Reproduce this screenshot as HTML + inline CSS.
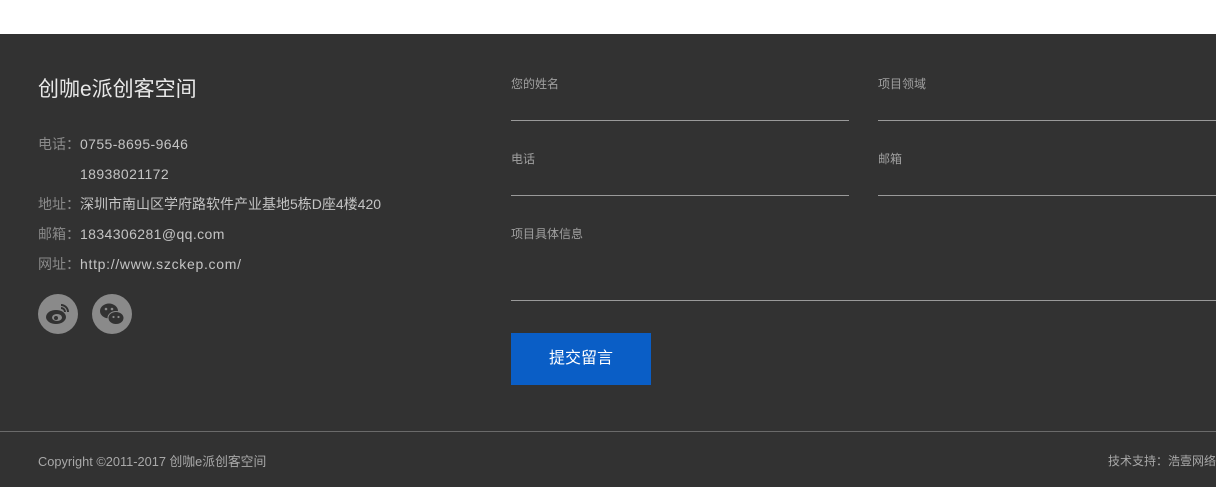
<!DOCTYPE html>
<html><head><meta charset="utf-8"><style>
*{margin:0;padding:0;box-sizing:border-box}
body{width:1216px;height:487px;overflow:hidden;background:#fff;font-family:"Liberation Sans","Noto Sans CJK SC",sans-serif;position:relative}
.f{position:absolute;left:0;top:34px;width:1216px;height:453px;background:#323232}
.a{position:absolute;white-space:nowrap}
.t{left:38px;top:76px;font-size:21px;color:#e8e8e8;line-height:28px}
.l{font-size:14px;color:#8a8a8a;line-height:18px}
.v{font-size:14px;color:#c4c4c4;line-height:18px}
.ls{letter-spacing:0.4px}
.lab{font-size:12px;color:#a0a0a0}
.line{position:absolute;height:1px;background:#9a9a9a}
.c{position:absolute;width:40px;height:40px;border-radius:50%;background:#8a8a8a;top:294px}
</style></head><body>
<div class="f"></div>
<div class="a t">创咖e派创客空间</div>
<div class="a l" style="left:38px;top:135px">电话：</div><div class="a v ls" style="left:80px;top:135px">0755-8695-9646</div>
<div class="a v ls" style="left:80px;top:165px">18938021172</div>
<div class="a l" style="left:38px;top:195px">地址：</div><div class="a v" style="left:80px;top:195px">深圳市南山区学府路软件产业基地5栋D座4楼420</div>
<div class="a l" style="left:38px;top:225px">邮箱：</div><div class="a v ls" style="left:80px;top:225px">1834306281@qq.com</div>
<div class="a l" style="left:38px;top:255px">网址：</div><div class="a v ls" style="left:80px;top:255px;letter-spacing:0.7px">http://www.szckep.com/</div>
<div class="c" style="left:38px"><svg width="40" height="40" viewBox="0 0 40 40"><ellipse cx="18" cy="23" rx="10" ry="7" fill="#323232"/><ellipse cx="19" cy="23.5" rx="5" ry="3.5" fill="#8a8a8a"/><circle cx="18" cy="24" r="2" fill="#323232"/><path d="M23 11a7 7 0 0 1 7 7M23 14a4 4 0 0 1 4 4" stroke="#323232" stroke-width="2" fill="none"/></svg></div>
<div class="c" style="left:92px"><svg width="40" height="40" viewBox="0 0 40 40"><ellipse cx="17" cy="17" rx="9" ry="7.5" fill="#323232"/><ellipse cx="24" cy="24" rx="8" ry="6.5" fill="#323232" stroke="#8a8a8a" stroke-width="1"/><circle cx="14" cy="15" r="1.3" fill="#8a8a8a"/><circle cx="20" cy="15" r="1.3" fill="#8a8a8a"/><circle cx="21.5" cy="23" r="1.1" fill="#8a8a8a"/><circle cx="26.5" cy="23" r="1.1" fill="#8a8a8a"/></svg></div>
<div class="a lab" style="left:511px;top:75px">您的姓名</div>
<div class="a lab" style="left:878px;top:75px">项目领域</div>
<div class="line" style="left:511px;top:120px;width:338px"></div>
<div class="line" style="left:878px;top:120px;width:338px"></div>
<div class="a lab" style="left:511px;top:150px">电话</div>
<div class="a lab" style="left:878px;top:150px">邮箱</div>
<div class="line" style="left:511px;top:195px;width:338px"></div>
<div class="line" style="left:878px;top:195px;width:338px"></div>
<div class="a lab" style="left:511px;top:225px">项目具体信息</div>
<div class="line" style="left:511px;top:300px;width:705px"></div>
<div class="a" style="left:511px;top:333px;width:140px;height:52px;background:#0a5ec6;color:#fff;font-size:16px;text-align:center;line-height:52px">提交留言</div>
<div class="line" style="left:0;top:431px;width:1216px;background:#6a6a6a"></div>
<div class="a lab" style="left:38px;top:451px;color:#a8a8a8;font-size:12.8px">Copyright ©2011-2017 创咖e派创客空间</div>
<div class="a lab" style="left:1108px;top:452px;color:#a8a8a8">技术支持：浩壹网络</div>
</body></html>
